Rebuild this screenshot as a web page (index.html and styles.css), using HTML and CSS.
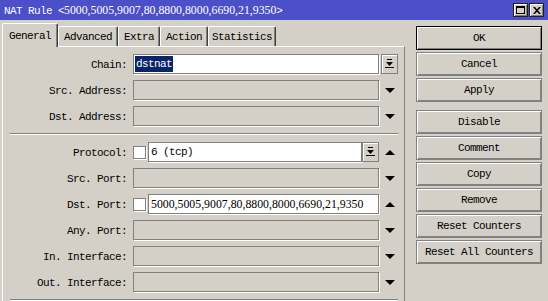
FILE: index.html
```html
<!DOCTYPE html>
<html lang="en">
  <head>
    <meta charset="UTF-8" />
    <meta name="viewport" content="width=device-width, initial-scale=1.0" />
    <title>NAT Rule</title>
    <link rel="stylesheet" href="styles.css">
  </head>
  <body>
    <div class="nat-window">
      <div class="nat-window__title">
        <span class="nat-window__caption">NAT Rule &lt;<span class="num">5000,5005,9007,80,8800,8000,6690,21,9350</span>&gt;</span>
        <div class="nat-window__controls">
          <div class="title-button">
            <svg width="9" height="8" viewBox="0 0 9 8"><path d="M0 0h9v8h-9z M1 2v5h7v-5z" fill="#000" fill-rule="evenodd"/></svg>
          </div>
          <div class="title-button">
            <svg width="8" height="7" viewBox="0 0 8 7"><path d="M0 0h2l2 2.2 2-2.2h2l-3 3.5 3 3.5h-2l-2-2.2-2 2.2h-2l3-3.5z" fill="#000"/></svg>
          </div>
        </div>
      </div>

      <div class="nat-window__body">
        <div class="rule-main">
          <div class="tabs">
            <div class="tab tab--active">General</div>
            <div class="tab">Advanced</div>
            <div class="tab">Extra</div>
            <div class="tab">Action</div>
            <div class="tab tab--narrow">Statistics</div>
          </div>

          <div class="rule-panel">
            <div class="field-row">
              <span class="field-row__label">Chain:</span>
              <div class="field-row__control">
                <div class="box box--white"><span class="selected">dstnat</span></div>
              </div>
              <div class="field-row__extra drop-button">
                <svg width="9" height="10" viewBox="0 0 9 10"><path d="M2 0h5v1h-5z M1 3h7l-3.5 4z M0 8h9v1h-9z" fill="#000"/></svg>
              </div>
            </div>
            <div class="field-row">
              <span class="field-row__label">Src. Address:</span>
              <div class="field-row__control"><div class="box"></div></div>
              <div class="field-row__extra"><svg width="10" height="5" viewBox="0 0 10 5"><polygon points="0,0 10,0 5,5" fill="#000"/></svg></div>
            </div>
            <div class="field-row">
              <span class="field-row__label">Dst. Address:</span>
              <div class="field-row__control"><div class="box"></div></div>
              <div class="field-row__extra"><svg width="10" height="5" viewBox="0 0 10 5"><polygon points="0,0 10,0 5,5" fill="#000"/></svg></div>
            </div>

            <div class="rule-separator"></div>

            <div class="field-row">
              <span class="field-row__label">Protocol:</span>
              <div class="field-row__control">
                <span class="checkbox"></span>
                <div class="box box--white box--text">6 (tcp)</div>
                <div class="drop-button">
                  <svg width="9" height="10" viewBox="0 0 9 10"><path d="M2 0h5v1h-5z M1 3h7l-3.5 4z M0 8h9v1h-9z" fill="#000"/></svg>
                </div>
              </div>
              <div class="field-row__extra"><svg width="10" height="5" viewBox="0 0 10 5"><polygon points="0,5 10,5 5,0" fill="#000"/></svg></div>
            </div>
            <div class="field-row">
              <span class="field-row__label">Src. Port:</span>
              <div class="field-row__control"><div class="box"></div></div>
              <div class="field-row__extra"><svg width="10" height="5" viewBox="0 0 10 5"><polygon points="0,0 10,0 5,5" fill="#000"/></svg></div>
            </div>
            <div class="field-row">
              <span class="field-row__label">Dst. Port:</span>
              <div class="field-row__control">
                <span class="checkbox"></span>
                <div class="box box--white box--text"><span class="num">5000,5005,9007,80,8800,8000,6690,21,9350</span></div>
              </div>
              <div class="field-row__extra"><svg width="10" height="5" viewBox="0 0 10 5"><polygon points="0,5 10,5 5,0" fill="#000"/></svg></div>
            </div>
            <div class="field-row">
              <span class="field-row__label">Any. Port:</span>
              <div class="field-row__control"><div class="box"></div></div>
              <div class="field-row__extra"><svg width="10" height="5" viewBox="0 0 10 5"><polygon points="0,0 10,0 5,5" fill="#000"/></svg></div>
            </div>
            <div class="field-row">
              <span class="field-row__label">In. Interface:</span>
              <div class="field-row__control"><div class="box"></div></div>
              <div class="field-row__extra"><svg width="10" height="5" viewBox="0 0 10 5"><polygon points="0,0 10,0 5,5" fill="#000"/></svg></div>
            </div>
            <div class="field-row">
              <span class="field-row__label">Out. Interface:</span>
              <div class="field-row__control"><div class="box"></div></div>
              <div class="field-row__extra"><svg width="10" height="5" viewBox="0 0 10 5"><polygon points="0,0 10,0 5,5" fill="#000"/></svg></div>
            </div>

            <div class="rule-separator"></div>
          </div>
        </div>

        <div class="rule-actions">
          <button class="action-button action-button--default">OK</button>
          <button class="action-button">Cancel</button>
          <button class="action-button">Apply</button>
          <button class="action-button action-button--spaced">Disable</button>
          <button class="action-button">Comment</button>
          <button class="action-button">Copy</button>
          <button class="action-button">Remove</button>
          <button class="action-button">Reset Counters</button>
          <button class="action-button">Reset All Counters</button>
        </div>
      </div>
    </div>
  </body>
</html>
```

FILE: styles.css
```css
/* General Styles */
body {
  margin: 0;
  font-family: "Liberation Mono", monospace;
  font-size: 11px;
  letter-spacing: -0.6px;
  color: #000;
  background-color: #d4d0c8;
}

.num {
  font-family: "Liberation Serif", serif;
  font-size: 11.8px;
  letter-spacing: 0;
}

.nat-window {
  width: 548px;
  height: 301px;
  display: flex;
  flex-flow: column;
  overflow: hidden;
}

/* Title bar */
.nat-window__title {
  height: 20px;
  flex: none;
  display: flex;
  align-items: center;
  justify-content: space-between;
  padding: 0 4px;
  background-color: #4b4fc8;
  color: #fff;
}

.nat-window__controls {
  display: flex;
  gap: 1px;
}

.title-button {
  width: 15px;
  height: 14px;
  box-sizing: border-box;
  display: flex;
  align-items: center;
  justify-content: center;
  border: 1px solid #202020;
  background-color: #d4d0c8;
  box-shadow: inset 1px 1px #fff, inset -1px -1px #808080;
}

/* Body */
.nat-window__body {
  flex: 1;
  display: flex;
  min-height: 0;
}

.rule-main {
  width: 405px;
  flex: none;
  box-sizing: border-box;
  padding-left: 2px;
  display: flex;
  flex-flow: column;
}

/* Tabs */
.tabs {
  height: 26px;
  flex: none;
  display: flex;
  align-items: flex-end;
}

.tab {
  height: 20px;
  box-sizing: border-box;
  padding: 0 5px;
  display: flex;
  align-items: center;
  border: 1px solid;
  border-color: #fff #404040 transparent #fff;
  border-bottom: none;
  border-radius: 2px 2px 0 0;
  box-shadow: inset -1px 0 #808080;
}

.tab--narrow {
  padding: 0 3px;
}

.tab--active {
  position: relative;
  height: 24px;
  margin-bottom: -1px;
  padding: 0 6px;
  background-color: #d4d0c8;
}

/* Panel */
.rule-panel {
  flex: 1;
  display: flex;
  flex-flow: column;
  gap: 6px;
  padding-top: 7px;
  border-top: 1px solid #fff;
  border-left: 1px solid #fff;
  border-right: 1px solid #808080;
}

.field-row {
  height: 20px;
  flex: none;
  display: flex;
  align-items: center;
}

.field-row__label {
  width: 124px;
  margin-right: 6px;
  padding-top: 1px;
  text-align: right;
}

.field-row__control {
  width: 246px;
  height: 20px;
  display: flex;
  align-items: center;
}

.field-row__extra {
  width: 17px;
  height: 20px;
  margin-left: 2px;
  display: flex;
  align-items: center;
  justify-content: center;
}

.box {
  flex: 1;
  height: 20px;
  box-sizing: border-box;
  display: flex;
  align-items: center;
  padding: 0 1px;
  border: 1px solid #808080;
  box-shadow: 1px 1px 0 #fff;
  background-color: #d4d0c8;
  white-space: nowrap;
}

.box--white {
  background-color: #fff;
}

.box--text {
  padding: 0 2px;
}

.selected {
  padding: 0 1px;
  line-height: 16px;
  background-color: #0a246a;
  color: #fff;
}

.checkbox {
  width: 13px;
  height: 13px;
  box-sizing: border-box;
  margin-right: 2px;
  flex: none;
  border: 1px solid #808080;
  box-shadow: 1px 1px 0 #fff;
  background-color: #fff;
}

.drop-button {
  width: 17px;
  height: 20px;
  flex: none;
  box-sizing: border-box;
  display: flex;
  align-items: center;
  justify-content: center;
  border: 1px solid #808080;
  box-shadow: inset 1px 1px #fff;
  background-color: #d4d0c8;
}

.rule-separator {
  height: 0;
  flex: none;
  margin: 1px 6px 1px 7px;
  border-top: 1px solid #808080;
  border-bottom: 1px solid #fff;
}

/* Buttons */
.rule-actions {
  flex: 1;
  display: flex;
  flex-flow: column;
  gap: 2px;
  padding: 6px 0 0 11px;
}

.action-button {
  width: 126px;
  height: 24px;
  flex: none;
  padding: 0;
  font: inherit;
  letter-spacing: inherit;
  color: #000;
  border: 1px solid #808080;
  box-shadow: inset 1px 1px #fff, inset -1px -1px #808080;
  background-color: #d4d0c8;
}

.action-button--default {
  border-color: #000;
}

.action-button--spaced {
  margin-top: 6px;
}
```
